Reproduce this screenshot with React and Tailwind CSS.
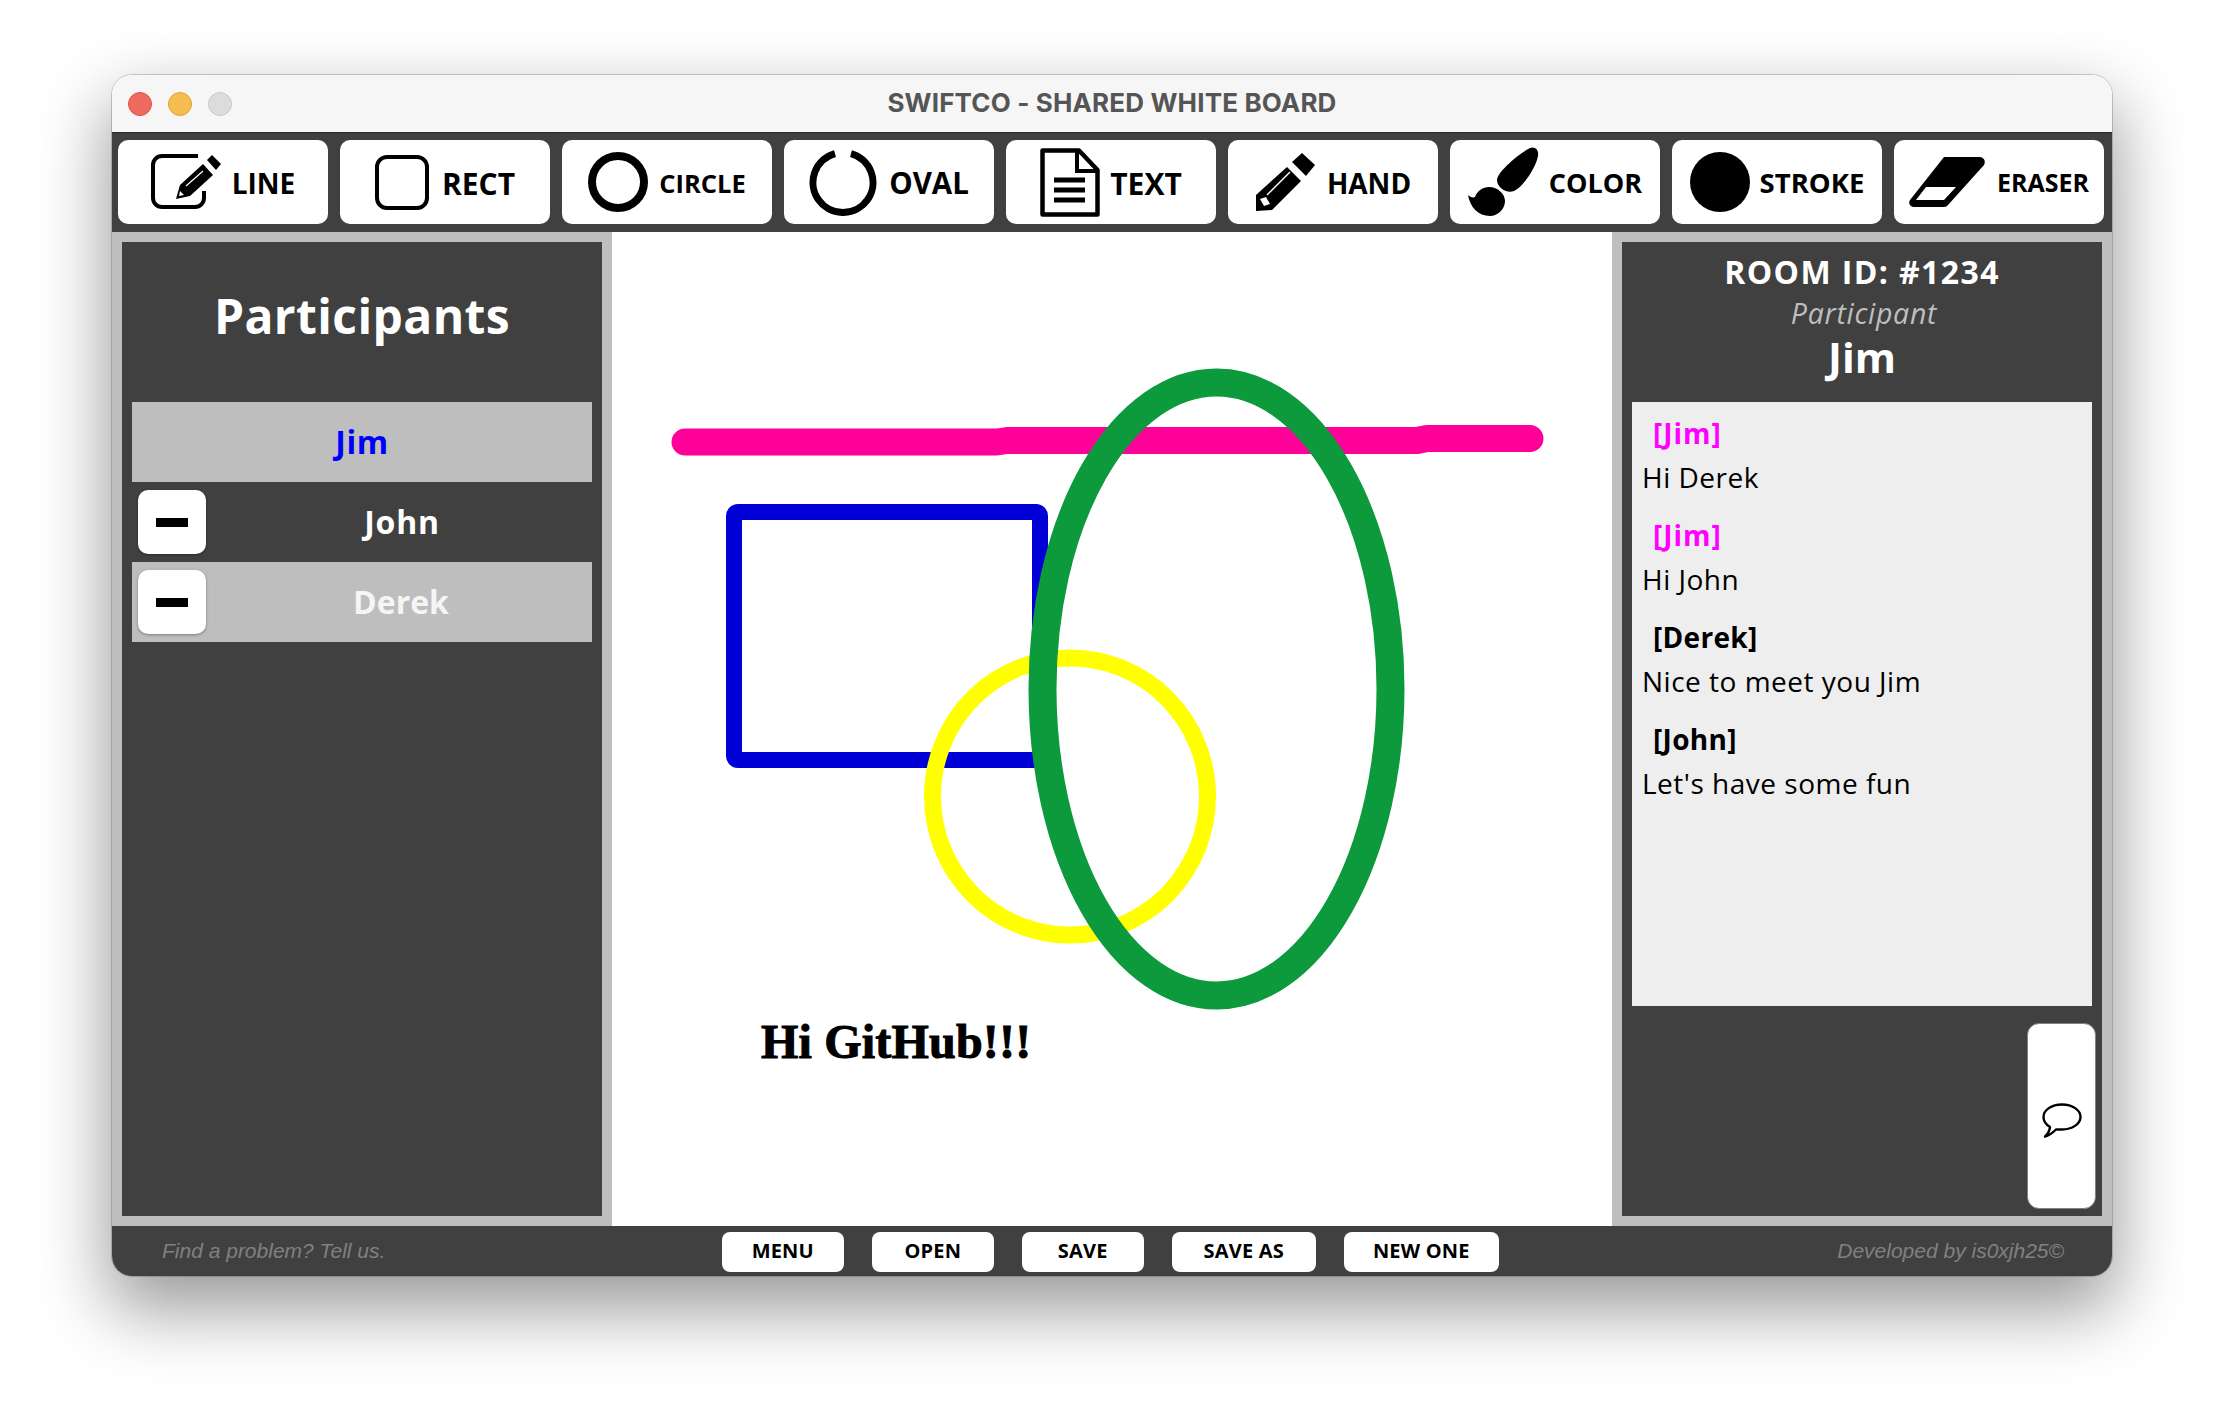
import React from "react";

const uiFont = "font-['Open_Sans',sans-serif]";

function EditIcon() {
  return (
    <svg width="70" height="56" viewBox="0 0 70 56">
      <path d="M47 2H11a9 9 0 0 0-9 9v33a9 9 0 0 0 9 9h33a9 9 0 0 0 9-9v-7" fill="none" stroke="#000" strokeWidth="4" />
      <path d="M29 31 52 10 62 21 39 42 25 45Z" fill="#000" />
      <path d="M56 6 61 1 70 10 65 16Z" fill="#000" />
      <path d="M35 32 52 17" stroke="#fff" strokeWidth="1.2" />
      <path d="M29 37 33 41 28 42Z" fill="#fff" />
    </svg>
  );
}

function RectIcon() {
  return (
    <svg width="54" height="55" viewBox="0 0 54 55">
      <rect x="2" y="2" width="50" height="51" rx="10" fill="none" stroke="#000" strokeWidth="4" />
    </svg>
  );
}

function CircleIcon() {
  return (
    <svg width="60" height="60" viewBox="0 0 60 60">
      <circle cx="30" cy="30" r="26" fill="none" stroke="#000" strokeWidth="8" />
    </svg>
  );
}

function OvalIcon() {
  return (
    <svg width="68" height="67" viewBox="0 0 68 67">
      <path d="M26 4.600A30 30 0 1 0 42 4.600" fill="none" stroke="#000" strokeWidth="7" />
    </svg>
  );
}

function DocIcon() {
  return (
    <svg width="60" height="69" viewBox="0 0 60 69">
      <path d="M2.500 2.500H39L57.500 22V66.500H2.500Z" fill="none" stroke="#000" strokeWidth="4.500" strokeLinejoin="round" />
      <path d="M37 3V23H57" fill="none" stroke="#000" strokeWidth="4" />
      <path d="M14 32H45M14 42H45M14 52H45" stroke="#000" strokeWidth="5" />
    </svg>
  );
}

function PencilIcon() {
  return (
    <svg width="60" height="60" viewBox="0 0 60 60">
      <path d="M32 15 46 29 17 58 1 59 1 43Z" fill="#000" />
      <path d="M37 10 47 1 60 13 51 24Z" fill="#000" />
      <path d="M12 43 35 20" stroke="#fff" strokeWidth="1.400" />
      <path d="M5 47 11 45 15 52 9 54Z" fill="#fff" />
    </svg>
  );
}

function BrushIcon() {
  return (
    <svg width="71" height="70" viewBox="0 0 71 70">
      <path d="M62 1C67-1 71 3 70 9 68 20 56 39 46 44 39 47 29 41 29 33 29 25 52 6 62 1Z" fill="#000" />
      <path d="M0 48C2 50 5 51 7 50 9 44 15 40 21 40 30 40 37 47 37 54 37 62 30 69 22 69 10 69 2 60 0 48Z" fill="#000" />
    </svg>
  );
}

function DotIcon() {
  return (
    <svg width="60" height="60" viewBox="0 0 60 60">
      <circle cx="30" cy="30" r="30" fill="#000" />
    </svg>
  );
}

function EraserIcon() {
  return (
    <svg width="76" height="50" viewBox="0 0 76 50">
      <path d="M35 0H70C75 0 77 4 75 8L39 48C38 49 37 50 35 50H5C1 50-1 46 1 43Z" fill="#000" />
      <path d="M17 30H47L35 43H7Z" fill="#fff" />
    </svg>
  );
}

function BubbleIcon() {
  return (
    <svg width="40" height="35" viewBox="0 0 40 35">
      <path
        d="M8 24C3 21 1.500 17.500 1.500 14 1.500 7 9.500 1.500 20 1.500S38.500 7 38.500 14 30 26.500 20 26.500C18 26.500 16 26.500 14 26.500 11 29.500 8 32.500 3 33.500 6 31 7.500 28 8 24Z"
        fill="none"
        stroke="#000"
        strokeWidth="2.400"
        strokeLinejoin="round"
      />
    </svg>
  );
}

const tools = [
  { label: "LINE", icon: <EditIcon />, cls: "gap-[11px] text-[28px]" },
  { label: "RECT", icon: <RectIcon />, cls: "gap-[13px] text-[30px]" },
  { label: "CIRCLE", icon: <CircleIcon />, cls: "gap-[11px] text-[25.500px]" },
  { label: "OVAL", icon: <OvalIcon />, cls: "gap-[12px] text-[29.500px]" },
  { label: "TEXT", icon: <DocIcon />, cls: "gap-[10px] text-[30px]" },
  { label: "HAND", icon: <PencilIcon />, cls: "gap-[12px] text-[28px]" },
  { label: "COLOR", icon: <BrushIcon />, cls: "gap-[10px] text-[27px]" },
  { label: "STROKE", icon: <DotIcon />, cls: "gap-[10px] text-[27.500px]" },
  { label: "ERASER", icon: <EraserIcon />, cls: "gap-[12px] text-[25px]" },
];

const messages = [
  { name: "[Jim]", text: "Hi Derek", me: true },
  { name: "[Jim]", text: "Hi John", me: true },
  { name: "[Derek]", text: "Nice to meet you Jim" },
  { name: "[John]", text: "Let's have some fun" },
];

const footerButtons = [
  { label: "MENU", cls: "w-[122px]" },
  { label: "OPEN", cls: "w-[122px]" },
  { label: "SAVE", cls: "w-[122px]" },
  { label: "SAVE AS", cls: "w-[144px]" },
  { label: "NEW ONE", cls: "w-[155px]" },
];

function MinusButton() {
  return (
    <button className="absolute left-[6px] top-[8px] flex h-16 w-[68px] items-center justify-center rounded-[10px] bg-white shadow-[0_1px_3px_rgba(0,0,0,0.35)]">
      <span className="block h-[9px] w-8 bg-black" />
    </button>
  );
}

function Canvas() {
  return (
    <div className="relative flex-1 bg-white">
      <svg className="block h-full w-full" viewBox="0 0 1000 994">
        <path d="M73 210H385L395 208.500H805L815 206.500H918" fill="none" stroke="#ff0099" strokeWidth="27" strokeLinecap="round" strokeLinejoin="round" />
        <rect x="122" y="280" width="306" height="248" rx="4" fill="none" stroke="#0000d6" strokeWidth="16" />
        <ellipse cx="458" cy="564.500" rx="137.500" ry="138.500" fill="none" stroke="#ffff00" strokeWidth="17" />
        <ellipse cx="604.500" cy="457" rx="174" ry="306.500" fill="none" stroke="#0c9a3c" strokeWidth="28" />
      </svg>
      <span className="absolute left-[149px] top-[782px] font-['Liberation_Serif',serif] text-[48px] font-bold leading-[56px] tracking-[0.2px] text-black [-webkit-text-stroke:1px_black]">
        Hi GitHub!!!
      </span>
    </div>
  );
}

export default function App() {
  return (
    <div className="flex h-screen w-full justify-center bg-white pt-[75px]">
      <div className={`flex h-[1201px] w-[2000px] flex-col overflow-hidden rounded-[20px] shadow-[0_0_0_1px_rgba(0,0,0,0.18),0_30px_70px_4px_rgba(0,0,0,0.4)] ${uiFont}`}>
        {/* title bar */}
        <div className="relative flex h-[57px] shrink-0 items-center justify-center bg-[#f6f6f6]">
          <div className="absolute left-4 flex gap-4">
            <span className="h-6 w-6 rounded-full border border-[#d9534a] bg-[#ee6a5f]" />
            <span className="h-6 w-6 rounded-full border border-[#dca33b] bg-[#f5bd4f]" />
            <span className="h-6 w-6 rounded-full border border-[#c8c8c8] bg-[#dcdcdc]" />
          </div>
          <span className="pb-[2px] font-['Inter',sans-serif] text-[26px] font-bold tracking-[0.15px] text-[#555555]">
            SWIFTCO - SHARED WHITE BOARD
          </span>
        </div>

        {/* toolbar */}
        <div className="flex h-[100px] shrink-0 items-start gap-3 border-t border-[#2a2a2a] bg-[#404040] pl-[6px] pt-[7px]">
          {tools.map((tool) => (
            <button
              key={tool.label}
              className={`flex h-[84px] w-[210px] items-center justify-center rounded-[10px] bg-white font-bold text-black ${tool.cls}`}
            >
              {tool.icon}
              <span className="pt-[2px]">{tool.label}</span>
            </button>
          ))}
        </div>

        {/* main */}
        <div className="flex min-h-0 flex-1">
          <div className="w-[500px] shrink-0 bg-[#bebebe] p-[10px]">
            <div className="h-full bg-[#404040] px-[10px]">
              <div className="flex h-[160px] items-center justify-center pb-3 text-[48px] font-bold tracking-[0.4px] text-white">
                Participants
              </div>
              <div className="flex h-20 items-center justify-center bg-[#bebebe] text-[32px] font-bold tracking-[0.5px] text-[#0000ff]">
                Jim
              </div>
              <div className="relative flex h-20 items-center justify-center pl-[80px] text-[32px] font-bold tracking-[0.8px] text-white">
                <MinusButton />
                John
              </div>
              <div className="relative flex h-20 items-center justify-center bg-[#bebebe] pl-[78px] text-[32px] font-bold text-[#f5f5f5]">
                <MinusButton />
                Derek
              </div>
            </div>
          </div>

          <Canvas />

          <div className="w-[500px] shrink-0 bg-[#bebebe] p-[10px]">
            <div className="flex h-full flex-col bg-[#404040]">
              <div className="flex h-[160px] shrink-0 flex-col items-center pt-2">
                <div className="h-[41px] text-[32px] font-bold leading-[44px] tracking-[1.4px] text-white">ROOM ID: #1234</div>
                <div className="h-[44px] pl-1 text-[28.500px] italic leading-[44px] tracking-[0.7px] text-[#bebebe]">Participant</div>
                <div className="h-11 text-[42px] font-bold leading-[44px] text-white">Jim</div>
              </div>
              <div className="mx-[10px] h-[604px] shrink-0 bg-[#eeeeee] pl-[10px] pt-[10px] text-black">
                {messages.map((m, i) => (
                  <div key={i} className="h-[102px]">
                    <div className={`pl-[11px] text-[28px] font-bold leading-[42px] ${m.me ? "text-[#ff00ff] tracking-[1px]" : "text-black tracking-[0.3px]"}`}>
                      {m.name}
                    </div>
                    <div className="pt-[2px] text-[28px] leading-[42px] tracking-[0.5px]">{m.text}</div>
                  </div>
                ))}
              </div>
              <div className="flex flex-1 justify-end pb-[7px] pr-[6px] pt-[17px]">
                <button className="flex w-[69px] items-center justify-center rounded-[12px] border border-[#8d7a86] bg-white pt-[8px]">
                  <BubbleIcon />
                </button>
              </div>
            </div>
          </div>
        </div>

        {/* footer */}
        <div className="flex h-[50px] shrink-0 items-center justify-between bg-[#404040] pl-[50px] pr-[48px]">
          <span className="font-['Liberation_Sans',sans-serif] text-[21px] italic text-[#808080]">Find a problem? Tell us.</span>
          <div className="-ml-[2px] flex gap-7 pt-[2px]">
            {footerButtons.map((b) => (
              <button key={b.label} className={`h-10 rounded-[8px] bg-white pb-[2px] text-[20px] font-bold tracking-[0.2px] text-black ${b.cls}`}>
                {b.label}
              </button>
            ))}
          </div>
          <span className="font-['Liberation_Sans',sans-serif] text-[21px] italic text-[#808080]">Developed by is0xjh25©</span>
        </div>
      </div>
    </div>
  );
}
